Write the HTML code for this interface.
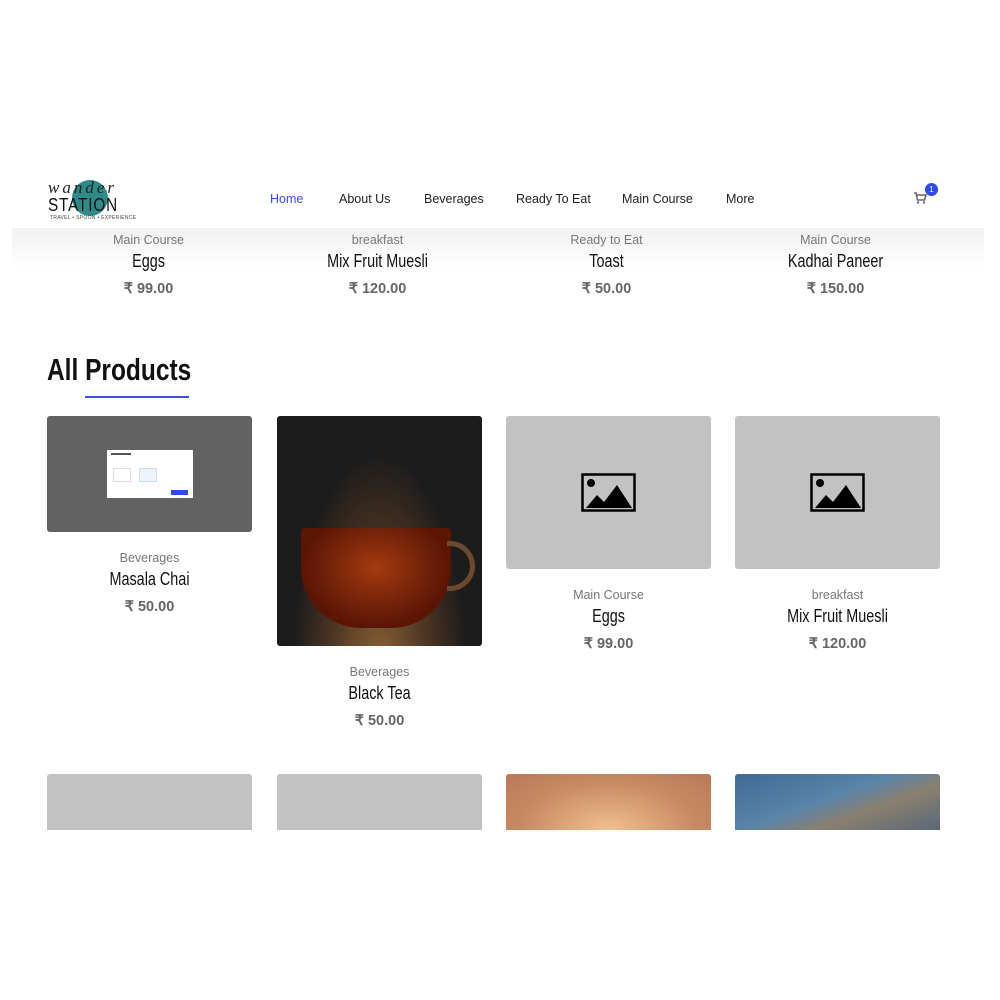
<!DOCTYPE html>
<html><head><meta charset="utf-8"><style>
*{margin:0;padding:0;box-sizing:border-box}
body{width:1000px;height:1000px;background:#fff;position:relative;overflow:hidden;font-family:"Liberation Sans",sans-serif}
.a{position:absolute}
.nav{top:192px;font-size:12.5px;color:#222}
.strip{left:12px;top:228px;width:972px;height:40px;background:linear-gradient(#f1f1f1,#fff)}
.cat{font-size:12.5px;color:#777;text-align:center;width:205px}
.name{font-size:18px;color:#111;text-align:center;width:205px;transform:scaleX(0.8)}
.price{font-size:14.5px;font-weight:bold;color:#666;text-align:center;width:205px}
.img{border-radius:3px;width:205px}
.ph{background:#c2c2c2}
</style></head><body>
<div class="a" style="left:72px;top:180px;width:36px;height:36px;border-radius:50%;background:#2f8a8a"></div>
<div class="a" style="left:48px;top:178px;font-family:'Liberation Serif',serif;font-style:italic;font-size:17px;color:#222;letter-spacing:3px">wander</div>
<div class="a" style="left:48px;top:195px;font-size:18px;color:#111;letter-spacing:1px;transform:scaleX(0.85);transform-origin:left">STATION</div>
<div class="a" style="left:50px;top:215px;font-size:5px;color:#444;letter-spacing:0.3px">TRAVEL • SPOON • EXPERIENCE</div>
<div class="a nav" style="left:270px;color:#3b4ef0">Home</div>
<div class="a nav" style="left:339px">About Us</div>
<div class="a nav" style="left:424px">Beverages</div>
<div class="a nav" style="left:516px">Ready To Eat</div>
<div class="a nav" style="left:622px">Main Course</div>
<div class="a nav" style="left:726px">More</div>
<svg class="a" style="left:913px;top:192px" width="14" height="12" viewBox="0 0 14 12"><path d="M1 1h2l1.5 7h7L13 3H4" fill="none" stroke="#666" stroke-width="1.6"/><circle cx="5" cy="10.5" r="1.2" fill="#666"/><circle cx="11" cy="10.5" r="1.2" fill="#666"/></svg>
<div class="a" style="left:925px;top:183px;width:13px;height:13px;border-radius:50%;background:#2f4af0;color:#fff;font-size:8px;text-align:center;line-height:13px">1</div>
<div class="a strip"></div>

<div class="a cat" style="left:46px;top:233px">Main Course</div>
<div class="a name" style="left:46px;top:251px">Eggs</div>
<div class="a price" style="left:46px;top:281px">₹ 99.00</div>
<div class="a cat" style="left:275px;top:233px">breakfast</div>
<div class="a name" style="left:275px;top:251px">Mix Fruit Muesli</div>
<div class="a price" style="left:275px;top:281px">₹ 120.00</div>
<div class="a cat" style="left:504px;top:233px">Ready to Eat</div>
<div class="a name" style="left:504px;top:251px">Toast</div>
<div class="a price" style="left:504px;top:281px">₹ 50.00</div>
<div class="a cat" style="left:733px;top:233px">Main Course</div>
<div class="a name" style="left:733px;top:251px">Kadhai Paneer</div>
<div class="a price" style="left:733px;top:281px">₹ 150.00</div>

<div class="a" style="left:47px;top:352px;font-weight:bold;font-size:31px;color:#111;transform:scaleX(0.79);transform-origin:left">All Products</div>
<div class="a" style="left:85px;top:396px;width:104px;height:2px;background:#3b4ef0"></div>

<div class="a img" style="left:47px;top:416px;height:116px;background:#626262">
 <div class="a" style="left:60px;top:34px;width:86px;height:48px;background:#fff">
  <div class="a" style="left:4px;top:3px;width:20px;height:2px;background:#555"></div>
  <div class="a" style="left:6px;top:18px;width:18px;height:14px;border:1px solid #ddd"></div>
  <div class="a" style="left:32px;top:18px;width:18px;height:14px;border:1px solid #cde;background:#eef3ff"></div>
  <div class="a" style="left:64px;top:40px;width:17px;height:5px;background:#2f4af0"></div>
 </div>
</div>
<div class="a cat" style="left:47px;top:551px">Beverages</div>
<div class="a name" style="left:47px;top:569px">Masala Chai</div>
<div class="a price" style="left:47px;top:599px">₹ 50.00</div>

<div class="a img" style="left:277px;top:416px;height:230px;background:radial-gradient(ellipse at 50% 110%,#8a6236 0,#4a3322 35%,transparent 60%),#1c1c1c">
 <div class="a" style="left:24px;top:112px;width:150px;height:100px;border-radius:4px 4px 60px 60px;background:radial-gradient(ellipse at 50% 40%,#a33a10,#5a1505 70%)"></div>
 <div class="a" style="left:170px;top:125px;width:28px;height:50px;border:5px solid #6a4a30;border-left:none;border-radius:0 25px 25px 0"></div>
</div>
<div class="a cat" style="left:277px;top:665px">Beverages</div>
<div class="a name" style="left:277px;top:683px">Black Tea</div>
<div class="a price" style="left:277px;top:713px">₹ 50.00</div>

<div class="a img ph" style="left:506px;top:416px;height:153px"></div>
<svg class="a" style="left:581px;top:473px" width="55" height="39" viewBox="0 0 55 39"><rect x="1.5" y="1.5" width="52" height="36" fill="none" stroke="#000" stroke-width="2.5"/><circle cx="10" cy="10" r="4" fill="#000"/><path d="M5 35L16 22l7 7L36 12l15 23z" fill="#000"/></svg>
<div class="a cat" style="left:506px;top:588px">Main Course</div>
<div class="a name" style="left:506px;top:606px">Eggs</div>
<div class="a price" style="left:506px;top:636px">₹ 99.00</div>

<div class="a img ph" style="left:735px;top:416px;height:153px"></div>
<svg class="a" style="left:810px;top:473px" width="55" height="39" viewBox="0 0 55 39"><rect x="1.5" y="1.5" width="52" height="36" fill="none" stroke="#000" stroke-width="2.5"/><circle cx="10" cy="10" r="4" fill="#000"/><path d="M5 35L16 22l7 7L36 12l15 23z" fill="#000"/></svg>
<div class="a cat" style="left:735px;top:588px">breakfast</div>
<div class="a name" style="left:735px;top:606px">Mix Fruit Muesli</div>
<div class="a price" style="left:735px;top:636px">₹ 120.00</div>

<div class="a img ph" style="left:47px;top:774px;height:56px;border-radius:3px 3px 0 0"></div>
<div class="a img ph" style="left:277px;top:774px;height:56px;border-radius:3px 3px 0 0"></div>
<div class="a img" style="left:506px;top:774px;height:56px;border-radius:3px 3px 0 0;background:radial-gradient(ellipse at 50% 100%,#f0c090,#c88a62 60%,#b87858)"></div>
<div class="a img" style="left:735px;top:774px;height:56px;border-radius:3px 3px 0 0;background:linear-gradient(160deg,#3e6a96 0,#5a84a8 45%,#8a8070 65%,#5a6878 100%)"></div>
</body></html>
